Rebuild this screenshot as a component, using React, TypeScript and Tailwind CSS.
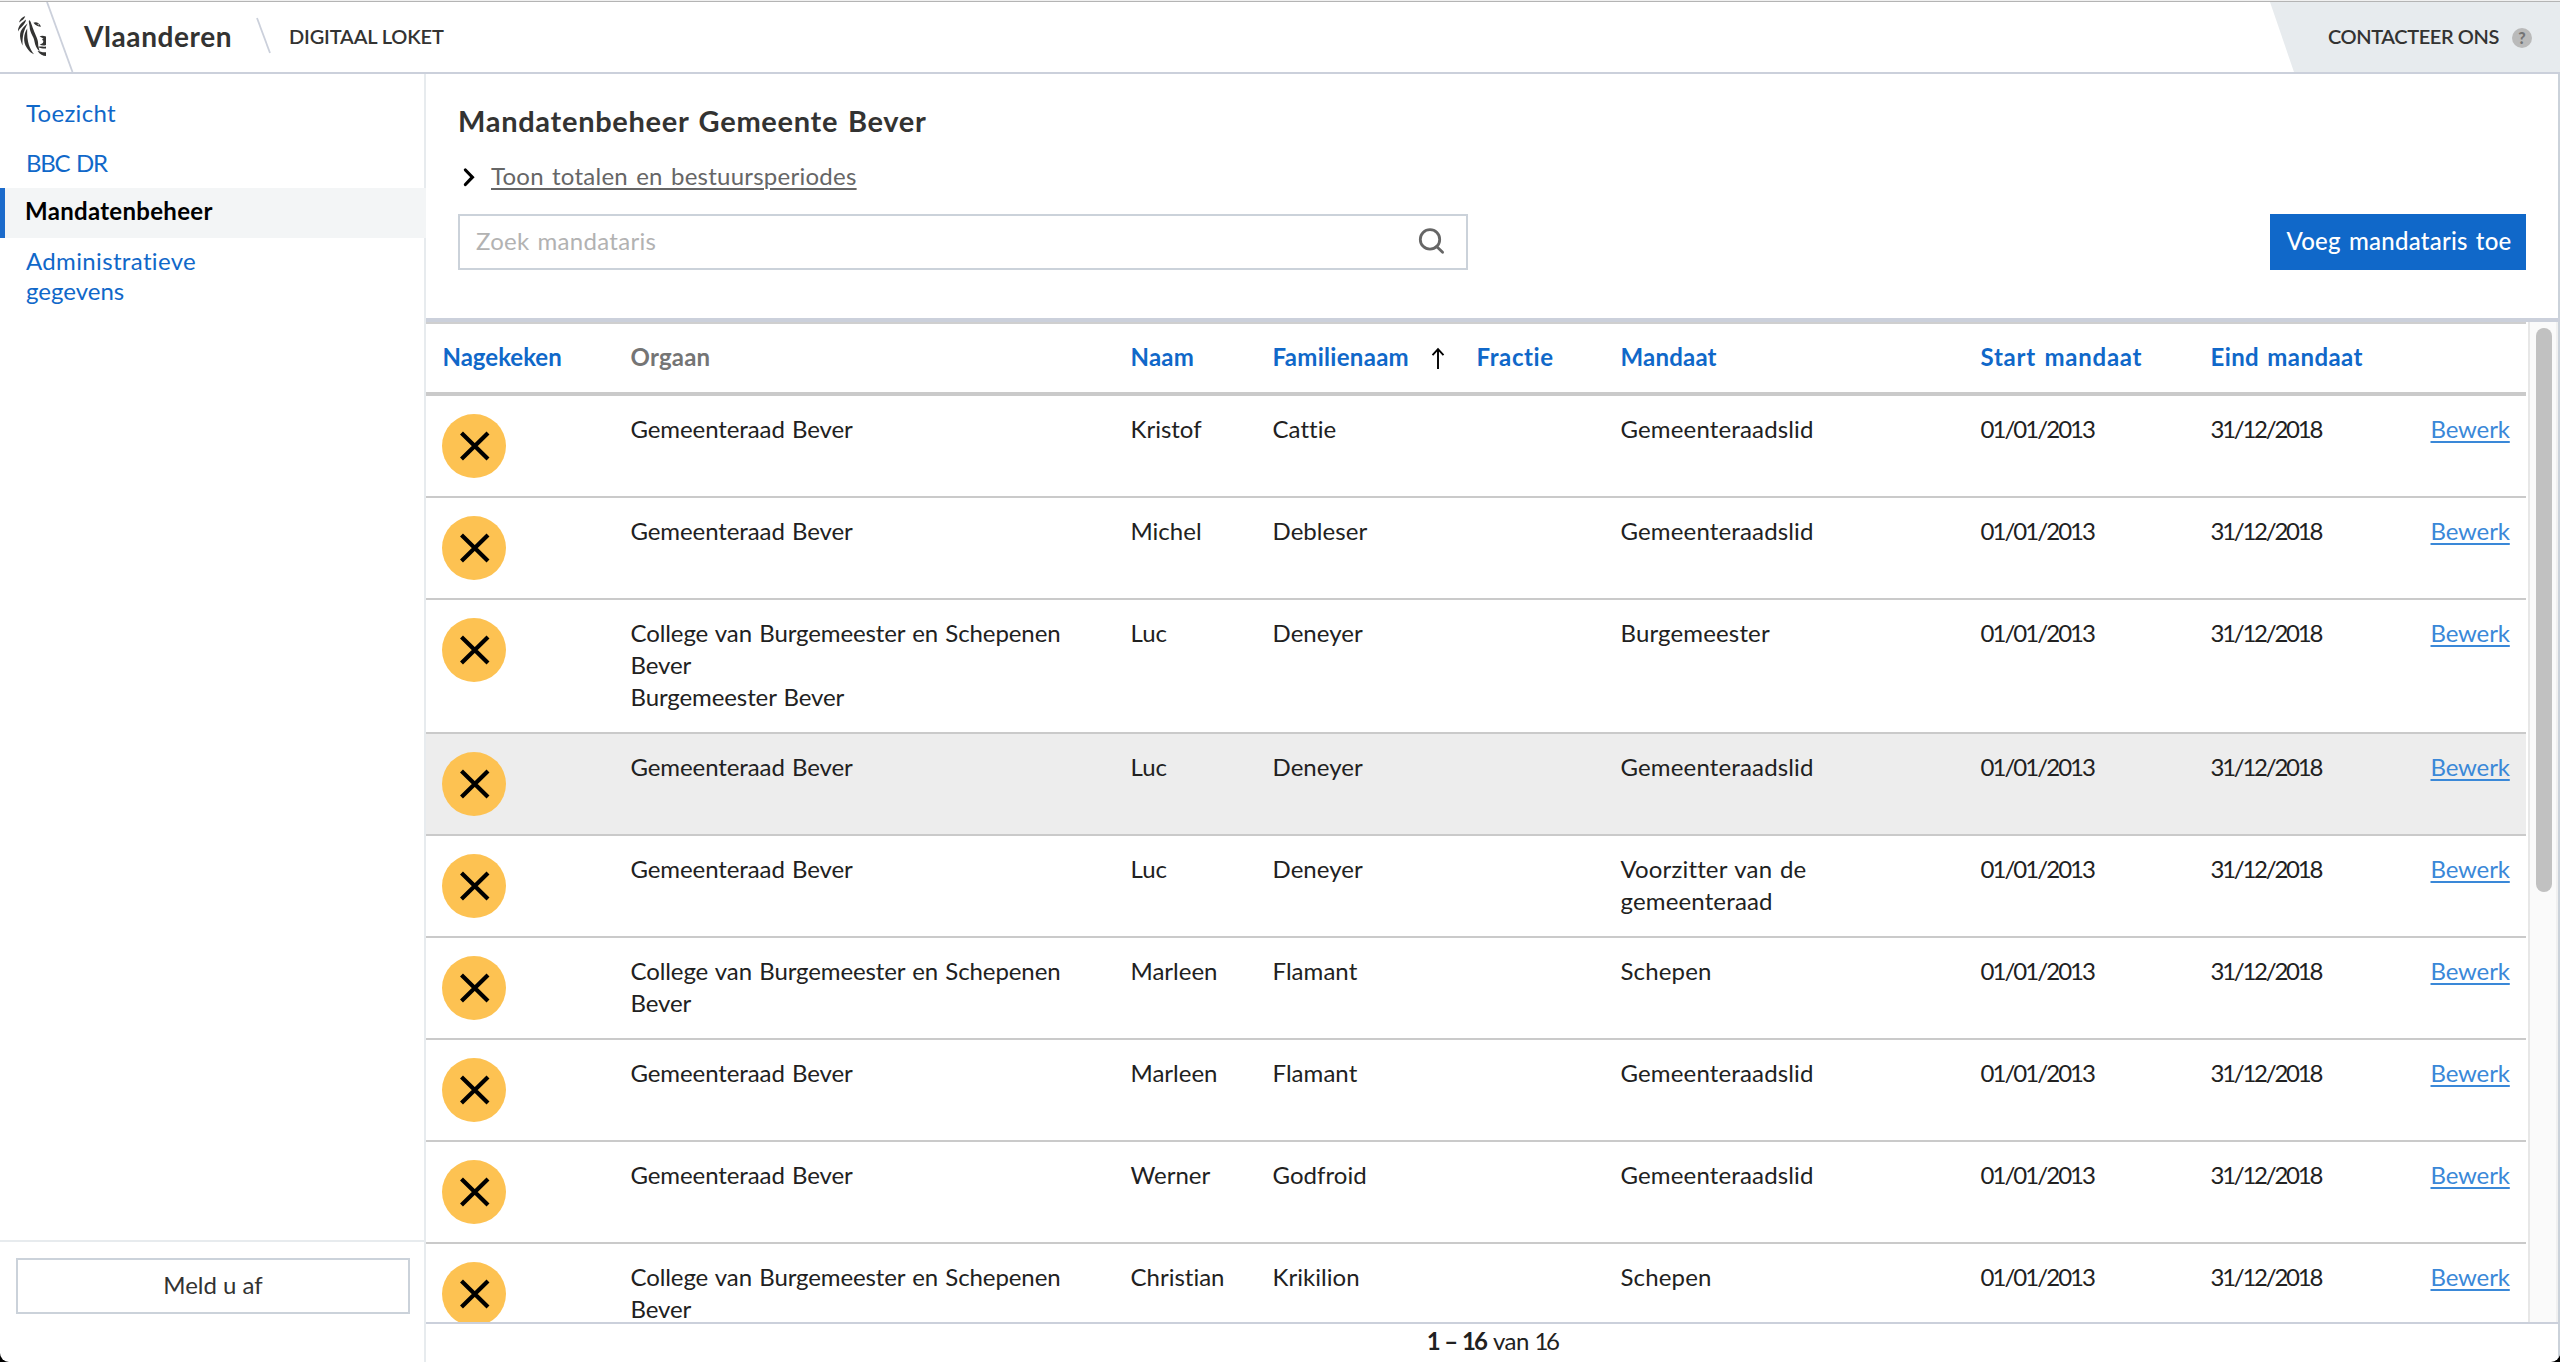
import type { ReactNode } from "react";

type Row = {
  organs: string[];
  first: string;
  last: string;
  mandate: string;
  hovered?: boolean;
};

const COUNCIL = "Gemeenteraad Bever";
const COLLEGE = "College van Burgemeester en Schepenen Bever";

const rows: Row[] = [
  { organs: [COUNCIL], first: "Kristof", last: "Cattie", mandate: "Gemeenteraadslid" },
  { organs: [COUNCIL], first: "Michel", last: "Debleser", mandate: "Gemeenteraadslid" },
  { organs: [COLLEGE, "Burgemeester Bever"], first: "Luc", last: "Deneyer", mandate: "Burgemeester" },
  { organs: [COUNCIL], first: "Luc", last: "Deneyer", mandate: "Gemeenteraadslid", hovered: true },
  { organs: [COUNCIL], first: "Luc", last: "Deneyer", mandate: "Voorzitter van de gemeenteraad" },
  { organs: [COLLEGE], first: "Marleen", last: "Flamant", mandate: "Schepen" },
  { organs: [COUNCIL], first: "Marleen", last: "Flamant", mandate: "Gemeenteraadslid" },
  { organs: [COUNCIL], first: "Werner", last: "Godfroid", mandate: "Gemeenteraadslid" },
  { organs: [COLLEGE], first: "Christian", last: "Krikilion", mandate: "Schepen" },
];

const GRID = "grid grid-cols-[188px_500px_142px_204px_144px_360px_230px_220px_112px]";

function LionLogo() {
  return (
    <svg width="32" height="46" viewBox="0 0 32 46" fill="#333332" className="shrink-0">
      <path d="M11.2 2.2C8.6 2.9 5.4 5.6 5.2 8.6C7 6.6 10.4 5.4 11.2 2.2Z" />
      <path d="M12 5.6C8.6 8.4 4 11 4 17.4C6.2 13.6 11.4 11 12 5.6Z" />
      <path d="M13.6 9.4C9.4 13 4.8 16.4 6.4 25C7 27.6 7.6 29.4 8.6 31.4C8.2 22.4 9.6 16.6 13.6 9.4Z" />
      <path d="M13.2 14.4C9.6 20 8.8 27.4 12.8 33.8C14.8 37.2 17.4 39.4 20 40.2C16 35 12.6 28.6 13.2 14.4Z" />
      <path d="M15 6.2C16 5.6 17.2 8.8 19.4 15.4C21.6 22 24.4 24.8 24.2 31.2L25.6 37.6C22.6 34.6 21 30.6 20.6 28C20 22.4 15.8 19.6 15.6 12.6C15.4 10 14.4 7.6 15 6.2Z" />
      <path fillRule="evenodd" d="M19.4 8.8C22 7.4 25.6 8.8 27 12.8C24.4 12.4 22.4 11.6 21 10.4Z M23.2 9.8L24.4 11.6L25.2 10.8Z" />
      <path d="M25.6 22.4C27.8 21.2 29.8 21.8 32 22.6V31C29.8 32 27.8 31.6 25.6 30.6C28 30 29.8 29 29.2 26.6C28 26.4 27.8 24.6 29.6 24.2C28 23.6 27 23.4 25.6 22.4Z" />
      <path d="M24.2 33.2C26.4 31.8 29.4 33.4 32 32.4V34.4C29.4 34.8 27 34 24.2 33.2Z" />
      <path d="M23.6 37C26.4 37.4 29 38.8 32 38.2V42C29 42 25.8 40.4 23.6 37Z" />
    </svg>
  );
}

function Header() {
  return (
    <header className="flex h-[74px] shrink-0 items-stretch border-t border-[#f0f0f0]">
      <div className="flex flex-1 items-stretch border-t border-b-2 border-t-[#b4b4b4] border-b-[#cbd0db]">
        <div className="flex w-[46px] justify-end pt-3">
          <LionLogo />
        </div>
        <svg width="30" height="70" viewBox="0 0 30 70" className="shrink-0">
          <path d="M1 0L26.5 70" stroke="#cbd0db" strokeWidth="1.8" />
        </svg>
        <span className="w-[180px] shrink-0 pl-2 pt-[16px] text-[28px] font-bold leading-9 tracking-[0.6px] text-[#333332]">
          Vlaanderen
        </span>
        <svg width="16" height="70" viewBox="0 0 16 70" className="shrink-0">
          <path d="M1 16L14 51" stroke="#cbd0db" strokeWidth="1.8" />
        </svg>
        <span className="pl-[17px] pt-[20px] text-[20px] font-semibold leading-7 tracking-[-0.15px] text-[#333332]">
          DIGITAAL LOKET
        </span>
        <div className="ml-auto flex w-[290px] bg-[#e7ebee] pl-[58px] pt-[20px] [clip-path:polygon(0_0,100%_0,100%_100%,24px_100%)]">
          <span className="w-[184px] text-[20px] font-semibold leading-7 tracking-[-0.4px] text-[#333332]">
            CONTACTEER ONS
          </span>
          <span className="mt-[6px] flex size-5 items-center justify-center rounded-full bg-[#bababa] text-[16px] font-black leading-none text-[#747474]">
            ?
          </span>
        </div>
      </div>
    </header>
  );
}

function NavItem({ children, className = "" }: { children: ReactNode; className?: string }) {
  return <a className={`block pl-[26px] text-[#1068c9] ${className}`}>{children}</a>;
}

function Sidebar() {
  return (
    <aside className="flex w-[426px] shrink-0 flex-col">
      <nav className="flex-1 border-r-2 border-[#e7ebee] pt-[14px] leading-[30px]">
        <NavItem className="h-[50px] pt-[10px] tracking-[0.3px]">Toezicht</NavItem>
        <NavItem className="h-[50px] pt-[10px] tracking-[-1.3px] [word-spacing:2px]">BBC DR</NavItem>
        <a className="-mr-0.5 block h-[50px] border-l-[5px] border-[#1c6bcb] bg-[#f3f5f6] pl-5 pt-2 font-bold tracking-[0.3px] text-black">
          Mandatenbeheer
        </a>
        <NavItem className="w-[240px] pt-[8px] tracking-[0.35px]">
          Administratieve
          <br />
          <span className="tracking-[0]">gegevens</span>
        </NavItem>
      </nav>
      <div className="h-[122px] border-r-2 border-t-2 border-[#e7ebee] px-4 pr-[14px] pt-4">
        <button className="h-14 w-full border-2 border-[#cbd2da] text-[#333332]">
          <span className="relative -top-px">Meld u af</span>
        </button>
      </div>
    </aside>
  );
}

function Toolbar() {
  return (
    <section className="h-[244px] border-r-2 border-[#cbd2da] pl-8 pr-8 pt-[29px]">
      <h1 className="text-[29px] font-bold leading-9 tracking-[0.7px] text-[#333332] [word-spacing:2px]">
        Mandatenbeheer Gemeente Bever
      </h1>
      <div className="mt-[21px] flex h-8 items-center">
        <svg width="22" height="22" viewBox="0 0 22 22" fill="none" className="mt-[2px]">
          <path d="M7.4 4L14.4 11.2L7.4 18.5" stroke="#000" strokeWidth="3.2" strokeLinecap="round" />
        </svg>
        <a className="ml-[11px] tracking-[0.25px] text-[#666] underline decoration-2 underline-offset-[3px] [word-spacing:1.8px]">
          Toon totalen en bestuursperiodes
        </a>
      </div>
      <div className="mt-[22px] flex justify-between">
        <div className="flex h-14 w-[1010px] items-center justify-between border-2 border-[#cbd2da] pl-4 pr-[20px]">
          <span className="relative -top-px tracking-[0.3px] text-[#b2b2b2] [word-spacing:1.5px]">
            Zoek mandataris
          </span>
          <svg width="28" height="28" viewBox="0 0 28 28" fill="none" stroke="#666" className="-mt-[2px]">
            <circle cx="12" cy="12.4" r="9.7" strokeWidth="2.8" />
            <path d="M18.6 19.4L24.6 25.2" strokeWidth="2.8" strokeLinecap="round" />
          </svg>
        </div>
        <button className="h-14 w-[256px] bg-[#1068c9] font-medium tracking-[0.25px] text-white [word-spacing:1.8px]">
          <span className="relative -top-px left-px">Voeg mandataris toe</span>
        </button>
      </div>
    </section>
  );
}

function TableHead() {
  return (
    <div
      className={`${GRID} h-[74px] border-b-4 border-t-2 border-b-[#cacaca] border-t-[#cfcfcf] pt-[17px] font-bold text-[#1068c9] *:pl-[16.5px]`}
    >
      <span className="tracking-[0]">Nagekeken</span>
      <span className="tracking-[0.2px] text-[#757575]">Orgaan</span>
      <span className="tracking-[0.2px]">Naam</span>
      <span className="flex tracking-[0.3px]">
        Familienaam
        <svg width="14" height="24" viewBox="0 0 14 24" fill="none" stroke="#000" className="ml-[22px] mt-[6px]">
          <path d="M7 22V2.5M1.5 8.2L7 2.2L12.5 8.2" strokeWidth="1.9" />
        </svg>
      </span>
      <span className="tracking-[0.6px]">Fractie</span>
      <span className="tracking-[0.2px]">Mandaat</span>
      <span className="tracking-[0.75px] [word-spacing:2px]">Start mandaat</span>
      <span className="tracking-[0.4px] [word-spacing:2px]">Eind mandaat</span>
    </div>
  );
}

function TableRow({ row }: { row: Row }) {
  return (
    <div
      className={`${GRID} min-h-[102px] border-b-2 border-[#cacaca] pb-[19px] pt-[17px] text-[#212121] *:pl-[16.5px] ${
        row.hovered ? "bg-[#ededed]" : ""
      }`}
    >
      <span className="-ml-[0.5px] h-16 pt-px">
        <svg width="64" height="64" viewBox="0 0 64 64">
          <circle cx="32" cy="32" r="32" fill="#fdc252" />
          <path d="M19.5 19L46 45M46 19L19.5 45" stroke="#000" strokeWidth="4.2" />
        </svg>
      </span>
      <span className="pr-4">
        {row.organs.map((organ) => (
          <span key={organ} className="block tracking-[-0.1px] [word-spacing:1.2px]">
            {organ}
          </span>
        ))}
      </span>
      <span>{row.first}</span>
      <span className="tracking-[0.05px]">{row.last}</span>
      <span />
      <span className="pr-4 tracking-[0.15px] [word-spacing:1.5px]">{row.mandate}</span>
      <span className="tracking-[-1.95px]">01/01/2013</span>
      <span className="tracking-[-2.25px]">31/12/2018</span>
      <span>
        <a className="tracking-[-0.15px] text-[#3a88d8] underline decoration-2 underline-offset-[3px]">Bewerk</a>
      </span>
    </div>
  );
}

export default function App() {
  return (
    <div className="h-[1362px] w-[2560px] overflow-hidden bg-black">
      <div className="flex h-full flex-col overflow-hidden rounded-b-[9px] bg-white font-['Lato','Liberation_Sans',sans-serif] text-[24px] leading-8 [font-variant-ligatures:none]">
        <Header />
        <div className="flex min-h-0 flex-1">
          <Sidebar />
          <main className="flex min-w-0 flex-1 flex-col">
            <Toolbar />
            <div className="h-1 shrink-0 bg-[#cbd0db]" />
            <div className="flex h-[1000px] shrink-0 border-r-2 border-[#cbd2da]">
              <div className="w-[2100px] overflow-hidden">
                <TableHead />
                {rows.map((row, i) => (
                  <TableRow key={i} row={row} />
                ))}
              </div>
              <div className="ml-0.5 flex-1 border-l-2 border-r-2 border-l-[#e7e7e7] border-r-[#f0f0f0] bg-[#fafafa] pl-1.5 pt-1.5">
                <div className="h-[564px] w-4 rounded-full bg-[#c1c1c1]" />
              </div>
            </div>
            <footer className="flex-1 border-r-2 border-t-2 border-r-[#cbd2da] border-t-[#cbd0db] pt-px text-center tracking-[-0.5px] text-[#212121]">
              <b className="tracking-[-1.8px] [word-spacing:1.5px]">1 – 16</b>{" "}
              <span className="ml-px">van</span> <span className="tracking-[-2.5px]">16</span>
            </footer>
          </main>
        </div>
      </div>
    </div>
  );
}
